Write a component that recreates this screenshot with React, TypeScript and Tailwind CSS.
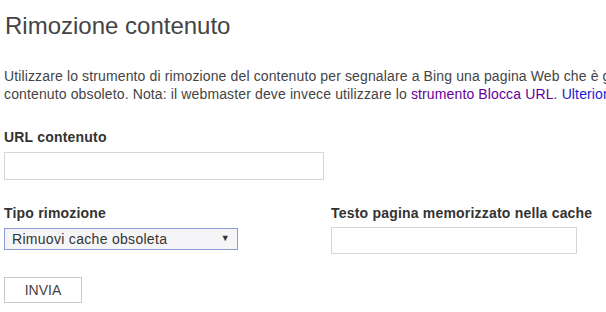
export default function App() {
  return (
    <div
      className="w-[606px] h-[312px] overflow-hidden bg-white px-[4px] text-[#444]"
      style={{ fontFamily: '"Liberation Sans", Arial, sans-serif' }}
    >
      <h1 className="pt-[12px] text-[24px] leading-[28px] text-[#444] pl-px">
        Rimozione contenuto
      </h1>

      <p className="mt-[27px] whitespace-nowrap text-[14px] leading-[18px] tracking-[0.13px] text-[#444]">
        Utilizzare lo strumento di rimozione del contenuto per segnalare a Bing
        una pagina Web che è già stata rimossa o che contiene
        <br />
        contenuto obsoleto. Nota: il webmaster deve invece utilizzare lo{" "}
        <a className="text-[#660099]">strumento Blocca URL</a>.{" "}
        <a className="text-[#1a1ad6]">Ulteriori informazioni</a>
      </p>

      <div className="mt-[25px]">
        <label className="block text-[14px] leading-[18px] font-bold tracking-[0.2px] text-[#333]">
          URL contenuto
        </label>
        <input
          type="text"
          className="mt-[6px] block h-[28px] w-[320px] border border-[#d6d6d6] bg-white outline-none"
        />
      </div>

      <div className="mt-[24px] flex items-start gap-[93px]">
        <div className="w-[234px]">
          <label className="block text-[14px] leading-[18px] font-bold tracking-[0.2px] text-[#333]">
            Tipo rimozione
          </label>
          <div className="mt-[6px] flex h-[22px] w-[234px] items-center justify-between border border-[#8f9ad6] bg-[#f5f5f7] pl-[7px] pr-[7px] text-[14px] tracking-[0.3px] text-[#333]">
            <span>Rimuovi cache obsoleta</span>
            <span className="text-[9px] text-[#333]">▼</span>
          </div>
        </div>
        <div>
          <label className="block text-[14px] leading-[18px] font-bold tracking-[0.2px] text-[#333]">
            Testo pagina memorizzato nella cache
          </label>
          <input
            type="text"
            className="mt-[5px] block h-[27px] w-[246px] border border-[#d6d6d6] bg-white outline-none"
          />
        </div>
      </div>

      <button className="mt-[23px] block h-[26px] w-[78px] border border-[#c8c8c8] bg-white text-[14px] text-[#444]">
        INVIA
      </button>
    </div>
  );
}
